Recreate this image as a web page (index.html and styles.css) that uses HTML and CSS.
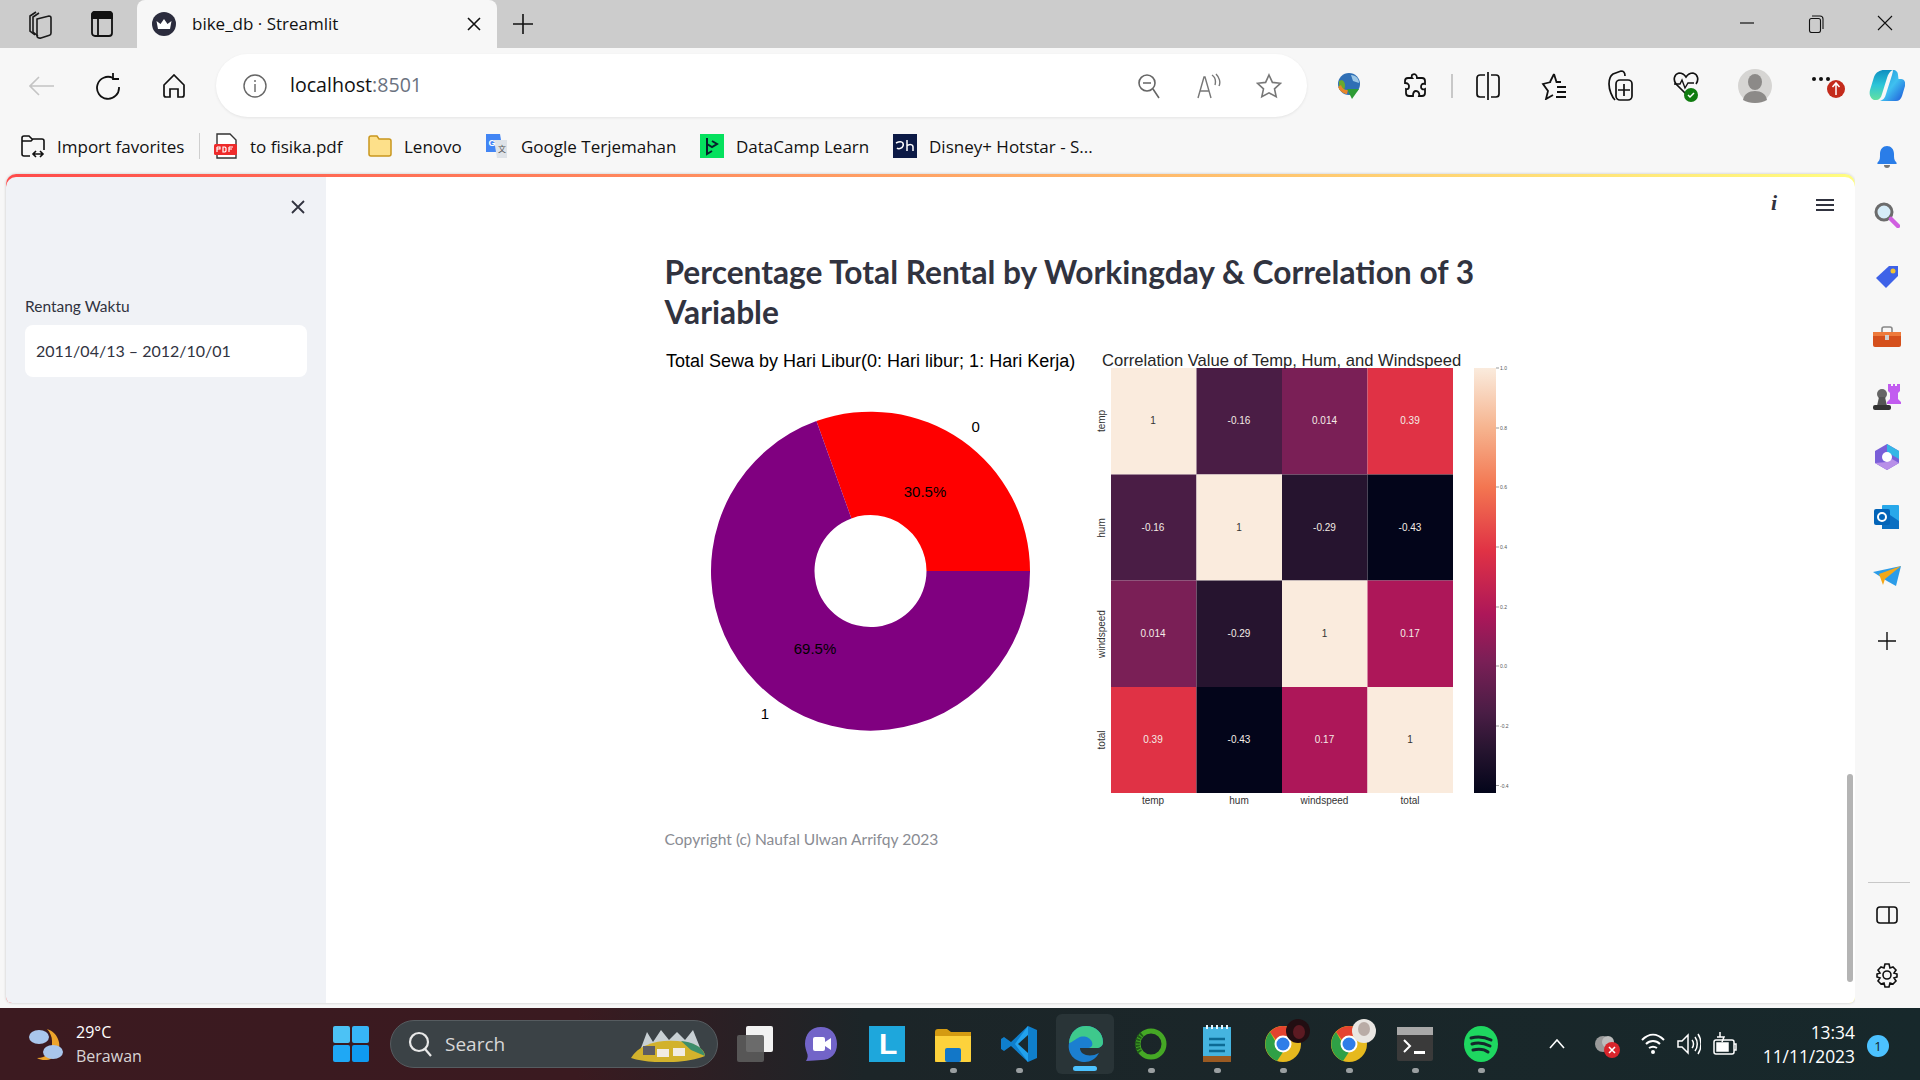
FILE: index.html
```html
<!DOCTYPE html>
<html lang="en">

<head>
    <meta charset="UTF-8">
    <meta name="viewport" content="width=device-width, initial-scale=1.0">
    <link rel="stylesheet" href="styles.css">
    <title>bike_db · Streamlit</title>
</head>

<body>
    <!-- browser tabs -->
    <header class="tabbar">
        <span class="tab-slot">
            <svg width="26" height="30" viewBox="0 0 26 30" fill="none" stroke="#1a1a1a" stroke-width="1.6"><path d="M9 26 4 22V7l6-4"/><path d="M12 27 7 23V8l6-4"/><path d="M11 10l12-3c1 0 2 1 2 2v15c0 1-.5 2-1.500 2.300L15 29c-2 .5-4-.5-4-2z"/></svg>
        </span>
        <span class="tab-slot tab-slot-narrow">
            <svg width="22" height="26" viewBox="0 0 22 26" fill="none" stroke="#111" stroke-width="1.800"><rect x="1" y="1" width="20" height="24" rx="3"/><path d="M1 7h20M7 7v18"/><path d="M1 4a3 3 0 0 1 3-3h14a3 3 0 0 1 3 3v3H1z" fill="#111"/></svg>
        </span>
        <div class="tab">
            <svg width="24" height="24" viewBox="0 0 24 24"><circle cx="12" cy="12" r="12" fill="#2b2c3d"/><path d="M4.500 9l4 3 3.500-5 3.500 5 4-3-1.500 8h-12z" fill="#fff"/></svg>
            <span class="tab-title">bike_db · Streamlit</span>
            <svg class="tab-close" width="14" height="14" viewBox="0 0 14 14" stroke="#111" stroke-width="1.600"><path d="M1 1l12 12M13 1 1 13"/></svg>
        </div>
        <span class="tab-new">
            <svg width="22" height="22" viewBox="0 0 22 22" stroke="#111" stroke-width="1.600"><path d="M11 1v20M1 11h20"/></svg>
        </span>
        <div class="window-controls">
            <span class="window-btn"><svg width="16" height="16" viewBox="0 0 16 16" stroke="#111" stroke-width="1.200"><path d="M1 8h14"/></svg></span>
            <span class="window-btn"><svg width="16" height="18" viewBox="0 0 16 18" fill="none" stroke="#111" stroke-width="1.100"><rect x="1.500" y="3.500" width="11" height="14" rx="2"/><path d="M4 1h8a3 3 0 0 1 3 3v10"/></svg></span>
            <span class="window-btn"><svg width="16" height="16" viewBox="0 0 16 16" stroke="#111" stroke-width="1.100"><path d="M1 1l14 14M15 1 1 15"/></svg></span>
        </div>
    </header>

    <!-- address bar and toolbar -->
    <nav class="toolbar">
        <span class="tool">
            <svg width="26" height="20" viewBox="0 0 26 20" fill="none" stroke="#c4c4c4" stroke-width="1.600"><path d="M25 10H1M10 1l-9 9 9 9"/></svg>
        </span>
        <span class="tool">
            <svg width="24" height="28" viewBox="0 0 24 28" fill="none" stroke="#111" stroke-width="1.800"><path d="M17 6A11 11 0 1 0 23 15"/><path d="M17 1v6h6" /></svg>
        </span>
        <span class="tool">
            <svg width="22" height="24" viewBox="0 0 22 24" fill="none" stroke="#111" stroke-width="1.700"><path d="M1 11 11 1l10 10v10a2 2 0 0 1-2 2h-4v-8H7v8H3a2 2 0 0 1-2-2z"/></svg>
        </span>
        <div class="address">
            <svg class="address-info" width="24" height="24" viewBox="0 0 24 24" fill="none" stroke="#666" stroke-width="1.400"><circle cx="12" cy="12" r="11"/><path d="M12 10v8M12 6v2"/></svg>
            <span class="address-text">localhost<span class="address-port">:8501</span></span>
            <span class="address-actions">
                <span class="tool tool-thin">
                    <svg width="22" height="26" viewBox="0 0 22 26" fill="none" stroke="#666" stroke-width="1.600"><circle cx="9" cy="10" r="8"/><path d="M5 10h8M15 16l6 9"/></svg>
                </span>
                <span class="tool tool-thin">
                    <svg width="24" height="26" viewBox="0 0 24 26" fill="none" stroke="#777" stroke-width="1.400"><path d="M1 25 7 4h1l6 21M3 18h9"/><path d="M15 2c3 2 4 6 3 10M19 1c3 3 5 8 3 12"/></svg>
                </span>
                <span class="tool tool-thin">
                    <svg width="26" height="26" viewBox="0 0 26 26" fill="none" stroke="#777" stroke-width="1.600"><path d="M13 2l3.400 7.400 8.100.9-6 5.500 1.700 8L13 19.800 5.800 23.800l1.700-8-6-5.500 8.100-.9z"/></svg>
                </span>
            </span>
        </div>
        <span class="toolbar-right">
            <span class="tool">
                <svg width="26" height="28" viewBox="0 0 26 28"><circle cx="13" cy="12" r="11" fill="#2f6fb5"/><path d="M3 9c4-2 6 1 6 5s-3 6-6 3z" fill="#6aa82e"/><path d="M15 3c5 0 8 4 8 8l-6-2z" fill="#9cc7e6"/><path d="M2 15c3 6 7 7 9 7l1-4c-4 0-6-2-7-5z" fill="#e8862a"/><path d="M11 17h12l-7 10z" fill="#2e9b35"/></svg>
            </span>
            <span class="tool">
                <svg width="24" height="28" viewBox="0 0 24 28" fill="none" stroke="#111" stroke-width="1.800"><path d="M9 3c3-2 5 0 5 3h5c2 0 3 1 3 3v3c-3-1-4 1-4 3s2 3 4 2v4c0 2-1 3-3 3h-3c1-3-1-5-3-5s-3 2-3 5H6c-2 0-3-1-3-3v-4c3 1 3-2 3-3s-1-3-4-3V9c0-2 1-3 3-3h4c-1-1 0-2 0-3z"/></svg>
            </span>
            <i class="toolbar-sep"></i>
            <span class="tool tool-split">
                <svg width="24" height="30" viewBox="0 0 24 30" fill="none" stroke="#111" stroke-width="1.700"><path d="M9 4H4a3 3 0 0 0-3 3v16a3 3 0 0 0 3 3h5M15 4h5a3 3 0 0 1 3 3v16a3 3 0 0 1-3 3h-5M12 1v28"/></svg>
            </span>
            <span class="tool">
                <svg width="26" height="28" viewBox="0 0 26 28" fill="none" stroke="#111" stroke-width="1.800"><path d="M13 2l2.500 8H20M10 10 2 12l5 7-2 8 7-4M9 10l4-8"/><path d="M16 15h9M16 20h9M15 25h10"/></svg>
            </span>
            <span class="tool">
                <svg width="26" height="32" viewBox="0 0 26 32" fill="none" stroke="#111" stroke-width="1.700"><path d="M8 30c-3-3-6-10-6-16 0-4 1-8 4-10l8-3c3 0 4 2 4 5"/><rect x="9" y="10" width="16" height="20" rx="4"/><path d="M17 14v12M11 20h12"/></svg>
            </span>
            <span class="tool">
                <svg width="26" height="32" viewBox="0 0 26 32"><path d="M13 24 3 14C0 10 1 4 6 3c3 0 5 1 7 4 2-3 4-4 7-4 5 1 6 7 3 11" fill="none" stroke="#111" stroke-width="1.700"/><path d="M1 14h6l2-4 3 8 3-5h6" fill="none" stroke="#111" stroke-width="1.400"/><circle cx="18" cy="25" r="7" fill="#107c10"/><path d="M15 25l2 2 4-4" fill="none" stroke="#fff" stroke-width="1.500"/></svg>
            </span>
            <span class="tool tool-profile">
                <svg width="34" height="34" viewBox="0 0 34 34"><circle cx="17" cy="17" r="17" fill="#d6d5d3"/><ellipse cx="17" cy="13" rx="7" ry="8" fill="#8c8a88"/><path d="M5 31c1-6 6-9 12-9s11 3 12 9c-3 2-8 3-12 3s-9-1-12-3z" fill="#8c8a88"/></svg>
            </span>
            <span class="tool tool-more">
                <svg width="36" height="30" viewBox="0 0 36 30"><circle cx="5" cy="8" r="2" fill="#111"/><circle cx="12" cy="8" r="2" fill="#111"/><circle cx="19" cy="8" r="2" fill="#111"/><circle cx="27" cy="18" r="9" fill="#c42b1c"/><path d="M27 24v-11M23.500 16l3.500-4 3.500 4" fill="none" stroke="#fff" stroke-width="1.500"/></svg>
            </span>
            <span class="tool tool-copilot">
                <svg width="36" height="34" viewBox="0 0 36 34">
                    <defs>
                        <linearGradient id="copilot-left" x1="0" y1="0" x2="0" y2="1">
                            <stop offset="0" stop-color="#0f8fc0"/>
                            <stop offset=".5" stop-color="#2cc5d8"/>
                            <stop offset="1" stop-color="#63e0a0"/>
                        </linearGradient>
                        <linearGradient id="copilot-right" x1="0" y1="0" x2="1" y2="1">
                            <stop offset="0" stop-color="#1b8fd0"/>
                            <stop offset=".5" stop-color="#3fc0f0"/>
                            <stop offset="1" stop-color="#1c52d8"/>
                        </linearGradient>
                    </defs>
                    <path d="M15 1h9c-3 1-5 4-6 8l-5 16c-1 4-3 6-6 6H5c-4-2-5-6-4-10l4-13c2-5 6-7 10-7z" fill="url(#copilot-left)"/>
                    <path d="M24 1c3 0 5 2 5 5l.5 4H32c3 0 5 3 4 7l-3 10c-1 3-3 5-6 5H11c3-1 5-3 6-7l6-19c.5-2 1-4 1-5z" fill="url(#copilot-right)"/>
                </svg>
            </span>
        </span>
    </nav>

    <div class="workspace">
        <div class="workspace-main">
            <!-- favorites bar -->
            <div class="bookmarks">
                <span class="bookmark bookmark-import">
                    <svg width="24" height="24" viewBox="0 0 24 24" fill="none" stroke="#111" stroke-width="1.600"><path d="M9 22H3a2 2 0 0 1-2-2V4a2 2 0 0 1 2-2h5l3 3h10a2 2 0 0 1 2 2v9M1 7h9l2-2"/><path d="M12 20h10M15 17l-3 3 3 3M19 17l3 3-3 3"/></svg>
                    Import favorites
                </span>
                <i class="bookmark-sep"></i>
                <span class="bookmark bookmark-pdf">
                    <svg width="24" height="26" viewBox="0 0 24 26"><path d="M3 1h13l6 6v18H3z" fill="#fff" stroke="#333" stroke-width="1.400"/><rect y="11" width="23" height="11" rx="1.500" fill="#ee2b2b"/><path d="M3 14v5M3 14h3v2H3M9 14v5h2l1-1v-3l-1-1zM15 14h4M15 14v5M15 16h3" fill="none" stroke="#fff" stroke-width="1.200"/></svg>
                    to fisika.pdf
                </span>
                <span class="bookmark bookmark-folder">
                    <svg width="24" height="22" viewBox="0 0 24 22"><path d="M1 3a2 2 0 0 1 2-2h6l2 3h10a2 2 0 0 1 2 2v13a2 2 0 0 1-2 2H3a2 2 0 0 1-2-2z" fill="#fde08a" stroke="#c9961e" stroke-width="1.500"/></svg>
                    Lenovo
                </span>
                <span class="bookmark bookmark-translate">
                    <svg width="24" height="24" viewBox="0 0 24 24"><path d="M1 0h14l3 18H1z" fill="#4285f4"/><path d="M9 6h13v18H12z" fill="#dfe3e8"/><text x="3.500" y="12" class="translate-g">G</text><text x="13" y="18" class="translate-x">文</text></svg>
                    Google Terjemahan
                </span>
                <span class="bookmark bookmark-datacamp">
                    <svg width="24" height="24" viewBox="0 0 24 24"><rect width="24" height="24" fill="#05e15e"/><path d="M7 4v16l5-3M7 10l5 3 5-3-5-3" fill="none" stroke="#06202c" stroke-width="2"/></svg>
                    DataCamp Learn
                </span>
                <span class="bookmark">
                    <svg width="24" height="24" viewBox="0 0 24 24"><rect width="24" height="24" fill="#0c1a46"/><path d="M3 9c6-3 8 0 7 3s-5 3-6 2" fill="none" stroke="#fff" stroke-width="1.500"/><path d="M14 6v11M14 12c2-2 6-2 6 1v4" fill="none" stroke="#fff" stroke-width="1.500"/></svg>
                    Disney+ Hotstar - S...
                </span>
            </div>

            <!-- streamlit page -->
            <div class="page">
                <aside class="sidebar">
                    <div class="sidebar-close">
                        <svg width="14" height="14" viewBox="0 0 14 14" stroke="#31333f" stroke-width="1.800"><path d="M1 1l12 12M13 1 1 13"/></svg>
                    </div>
                    <label class="date-label">Rentang Waktu</label>
                    <div class="date-input">2011/04/13 – 2012/10/01</div>
                </aside>
                <main class="report">
                    <div class="report-menu">
                        <span class="report-info">i</span>
                        <svg width="18" height="14" viewBox="0 0 18 14" stroke="#31333f" stroke-width="2"><path d="M0 2h18M0 7h18M0 12h18"/></svg>
                    </div>
                    <div class="report-body">
                        <h2 class="report-title">Percentage Total Rental by Workingday &amp; Correlation of 3 Variable</h2>
                        <div class="charts">
                            <svg class="chart-pie" width="437" height="460" viewBox="0 0 437 460">
                                <text x="1" y="21" class="pie-title">Total Sewa by Hari Libur(0: Hari libur; 1: Hari Kerja)</text>
                                <path d="M365 225A159.500 159.500 0 0 0 151.400 75.100L186.400 172.400A56 56 0 0 1 261.500 225Z" fill="#ff0000"/>
                                <path d="M365 225A159.500 159.500 0 1 1 151.400 75.100L186.400 172.400A56 56 0 1 0 261.500 225Z" fill="#800080"/>
                                <text x="310.700" y="85.500" class="pie-label">0</text>
                                <text x="100" y="372.500" class="pie-label">1</text>
                                <text x="260" y="150.500" class="pie-label">30.5%</text>
                                <text x="150" y="307.500" class="pie-label">69.5%</text>
                            </svg>
                            <svg class="chart-heat" width="430" height="470" viewBox="0 0 430 470">
                                <defs>
                                    <linearGradient id="rocket" x1="0" y1="0" x2="0" y2="1">
                                        <stop offset="0" stop-color="#faebdd"/>
                                        <stop offset=".14" stop-color="#f6b48f"/>
                                        <stop offset=".28" stop-color="#f37651"/>
                                        <stop offset=".43" stop-color="#e03245"/>
                                        <stop offset=".58" stop-color="#ad1759"/>
                                        <stop offset=".69" stop-color="#7a1f56"/>
                                        <stop offset=".81" stop-color="#4a1d45"/>
                                        <stop offset=".9" stop-color="#26142f"/>
                                        <stop offset="1" stop-color="#03051a"/>
                                    </linearGradient>
                                </defs>
                                <rect x="21" y="22" width="85.500" height="106.500" fill="#faebdd"/>
                                <rect x="106.500" y="22" width="85.500" height="106.500" fill="#4a1d45"/>
                                <rect x="192" y="22" width="85.500" height="106.500" fill="#7a1f56"/>
                                <rect x="277.500" y="22" width="85.500" height="106.500" fill="#e03245"/>
                                <rect x="21" y="128.500" width="85.500" height="106" fill="#4a1d45"/>
                                <rect x="106.500" y="128.500" width="85.500" height="106" fill="#faebdd"/>
                                <rect x="192" y="128.500" width="85.500" height="106" fill="#26142f"/>
                                <rect x="277.500" y="128.500" width="85.500" height="106" fill="#03051a"/>
                                <rect x="21" y="234.500" width="85.500" height="106.500" fill="#7a1f56"/>
                                <rect x="106.500" y="234.500" width="85.500" height="106.500" fill="#26142f"/>
                                <rect x="192" y="234.500" width="85.500" height="106.500" fill="#faebdd"/>
                                <rect x="277.500" y="234.500" width="85.500" height="106.500" fill="#ad1759"/>
                                <rect x="21" y="341" width="85.500" height="106" fill="#e03245"/>
                                <rect x="106.500" y="341" width="85.500" height="106" fill="#03051a"/>
                                <rect x="192" y="341" width="85.500" height="106" fill="#ad1759"/>
                                <rect x="277.500" y="341" width="85.500" height="106" fill="#faebdd"/>

                                <text x="12" y="20" class="heat-title">Correlation Value of Temp, Hum, and Windspeed</text>

                                <g class="heat-dark">
                                    <text x="63" y="78">1</text>
                                    <text x="149" y="184.500">1</text>
                                    <text x="234.500" y="291">1</text>
                                    <text x="320" y="397">1</text>
                                </g>
                                <g class="heat-light">
                                    <text x="149" y="78">-0.16</text>
                                    <text x="234.500" y="78">0.014</text>
                                    <text x="320" y="78">0.39</text>
                                    <text x="63" y="184.500">-0.16</text>
                                    <text x="234.500" y="184.500">-0.29</text>
                                    <text x="320" y="184.500">-0.43</text>
                                    <text x="63" y="291">0.014</text>
                                    <text x="149" y="291">-0.29</text>
                                    <text x="320" y="291">0.17</text>
                                    <text x="63" y="397">0.39</text>
                                    <text x="149" y="397">-0.43</text>
                                    <text x="234.500" y="397">0.17</text>
                                </g>
                                <g class="heat-axis">
                                    <text x="63" y="458">temp</text>
                                    <text x="149" y="458">hum</text>
                                    <text x="234.500" y="458">windspeed</text>
                                    <text x="320" y="458">total</text>
                                    <text transform="translate(15 75) rotate(-90)">temp</text>
                                    <text transform="translate(15 182) rotate(-90)">hum</text>
                                    <text transform="translate(15 288) rotate(-90)">windspeed</text>
                                    <text transform="translate(15 394) rotate(-90)">total</text>
                                </g>
                                <rect x="384" y="22" width="22" height="425" fill="url(#rocket)"/>
                                <path d="M406 22h3M406 82h3M406 141h3M406 201h3M406 261h3M406 320h3M406 380h3M406 439.500h3" stroke="#555" stroke-width=".6"/>
                                <g class="heat-ticks">
                                    <text x="410" y="24">1.0</text>
                                    <text x="410" y="84">0.8</text>
                                    <text x="410" y="143">0.6</text>
                                    <text x="410" y="203">0.4</text>
                                    <text x="410" y="263">0.2</text>
                                    <text x="410" y="322">0.0</text>
                                    <text x="410" y="382">-0.2</text>
                                    <text x="410" y="441.500">-0.4</text>
                                </g>
                            </svg>
                        </div>
                        <p class="caption">Copyright (c) Naufal Ulwan Arrifqy 2023</p>
                    </div>
                    <i class="scroll-thumb"></i>
                </main>
            </div>
        </div>

        <!-- edge sidebar -->
        <aside class="edgebar">
            <span class="edge-item">
                <svg width="24" height="24" viewBox="0 0 24 24"><path d="M3 17c2-2 2-4 2-8 0-5 3-8 7-8s7 3 7 8c0 4 0 6 2 8 1 1 1 2 0 2H3c-1 0-1-1 0-2z" fill="#2a7de8"/><path d="M9 20h6c0 2-1 3-3 3s-3-1-3-3z" fill="#777"/></svg>
            </span>
            <span class="edge-item edge-search">
                <svg width="26" height="26" viewBox="0 0 26 26"><circle cx="10" cy="10" r="8" fill="#d6ecf8" stroke="#6c6c6c" stroke-width="3"/><path d="M17 17l7 7" stroke="#d05fe0" stroke-width="4.500" stroke-linecap="round"/></svg>
            </span>
            <span class="edge-item">
                <svg width="26" height="26" viewBox="0 0 26 26"><path d="M15 2h9v10L12 24 2 14z" fill="#3e62e8"/><circle cx="19" cy="7" r="2.500" fill="#f2c230"/></svg>
            </span>
            <span class="edge-item">
                <svg width="28" height="22" viewBox="0 0 28 22"><path d="M9 6V3a2 2 0 0 1 2-2h6a2 2 0 0 1 2 2v3" fill="none" stroke="#888" stroke-width="1.600"/><rect y="6" width="28" height="15" rx="2" fill="#d5501c"/><rect y="6" width="28" height="4" fill="#ee7a3b"/><rect x="12" y="9" width="4" height="5" fill="#cfcfcf"/></svg>
            </span>
            <span class="edge-item">
                <svg width="30" height="28" viewBox="0 0 30 28"><circle cx="10" cy="11" r="5" fill="#666"/><path d="M7 14h6l2 9H5z" fill="#555"/><rect x="1" y="22" width="18" height="5" rx="2" fill="#333"/><path d="M16 1h3v2h2V1h2v2h2V1h3v7l-2 2v6l3 3v2H15v-2l3-3v-6l-2-2z" fill="#c25cf0"/></svg>
            </span>
            <span class="edge-item">
                <svg width="26" height="28" viewBox="0 0 26 28"><path d="M13 1 25 8v12l-12 7L1 20V8z" fill="#7a5fd8"/><path d="M13 1 25 8v8l-7-4-5-3z" fill="#35b6e6"/><path d="M1 20l12 7 12-7-7-4-5 3z" fill="#b88fe8"/><circle cx="13" cy="14" r="5" fill="#fff"/></svg>
            </span>
            <span class="edge-item">
                <svg width="26" height="26" viewBox="0 0 26 26"><rect x="8" y="1" width="17" height="24" rx="1" fill="#28a8ea"/><path d="M8 14l8-3 9 6v8H8z" fill="#0a6fc2"/><rect y="5" width="16" height="16" rx="2" fill="#0364b8"/><circle cx="8" cy="13" r="4" fill="none" stroke="#fff" stroke-width="2"/></svg>
            </span>
            <span class="edge-item">
                <svg width="28" height="22" viewBox="0 0 28 22"><path d="M0 6 28 0 23 20 14 15z" fill="#2b9ce8"/><path d="M6 8 28 0 12 13l-2 6z" fill="#f5a818"/></svg>
            </span>
            <span class="edge-item edge-add">
                <svg width="20" height="20" viewBox="0 0 20 20" stroke="#111" stroke-width="1.400"><path d="M10 1v18M1 10h18"/></svg>
            </span>
            <span class="edge-bottom">
                <i class="edge-sep"></i>
                <span class="edge-item">
                    <svg width="22" height="20" viewBox="0 0 22 20" fill="none" stroke="#111" stroke-width="1.600"><rect x="1" y="2" width="20" height="16" rx="3"/><path d="M13 2v16"/></svg>
                </span>
                <span class="edge-item">
                    <svg width="26" height="26" viewBox="0 0 26 26" fill="none" stroke="#111" stroke-width="1.600"><circle cx="13" cy="13" r="4"/><path d="M11 2h4l1 4 3-1 3 3-2 3 3 1v3l-3 1 2 3-3 3-3-1-1 4h-4l-1-4-3 1-3-3 2-3-3-1v-3l3-1-2-3 3-3 3 1z"/></svg>
                </span>
            </span>
        </aside>
    </div>

    <!-- windows taskbar -->
    <footer class="taskbar">
        <div class="weather">
            <svg width="38" height="36" viewBox="0 0 38 36"><path d="M20 3c10 3 16 15 10 25-4 6-13 8-20 4 9 0 16-6 15-17 0-4-2-9-5-12z" fill="#eda42b"/><ellipse cx="12" cy="11" rx="10" ry="7" fill="#a9c6ec"/><ellipse cx="26" cy="26" rx="10" ry="7" fill="#a9c6ec"/></svg>
            <div class="weather-text">
                <span>29°C</span>
                <span class="weather-sub">Berawan</span>
            </div>
        </div>
        <span class="start">
            <svg width="36" height="36" viewBox="0 0 36 36"><rect width="17" height="17" rx="2" fill="#4cc2f5"/><rect x="19" width="17" height="17" rx="2" fill="#37b5f6"/><rect y="19" width="17" height="17" rx="2" fill="#1fa8f5"/><rect x="19" y="19" width="17" height="17" rx="2" fill="#0f9af0"/></svg>
        </span>
        <div class="searchbox">
            <svg width="24" height="26" viewBox="0 0 24 26" fill="none" stroke="#e8e8e8" stroke-width="2.200"><circle cx="11" cy="11" r="9"/><path d="M17 18l6 7"/></svg>
            <span>Search</span>
            <svg class="search-art" width="76" height="36" viewBox="0 0 76 36"><path d="M10 22 16 6l6 10 8-12 8 10 8-8 8 8 8-10 8 20z" fill="#c8d0d4"/><path d="M0 32c8-14 30-20 54-16 12 2 20 8 20 14-20 8-56 8-74 2z" fill="#d2b22c"/><path d="M50 15c10 1 22 5 24 15l-14-6z" fill="#3d8e6b"/><rect x="12" y="20" width="12" height="9" fill="#5c5c62"/><rect x="26" y="23" width="12" height="8" fill="#f1ece4"/><rect x="42" y="22" width="12" height="8" fill="#f1ece4"/></svg>
        </div>
        <div class="task-apps">
            <span class="task-app">
                <svg width="36" height="36" viewBox="0 0 36 36"><rect x="9" y="0" width="27" height="26" rx="2" fill="#f2f2f2"/><rect y="9" width="27" height="27" rx="2" fill="#5c5c5c" opacity=".9"/></svg>
            </span>
            <span class="task-app">
                <svg width="34" height="36" viewBox="0 0 34 36"><path d="M17 1c10 0 16 7 16 17s-6 16-16 16c-4 0-9 1-15 1 2-3 2-6 1-8-1-3-2-6-2-9C1 8 7 1 17 1z" fill="#7264c8"/><rect x="9" y="11" width="12" height="14" rx="2" fill="#fff"/><path d="M21 16l6-4v12l-6-4z" fill="#fff"/></svg>
            </span>
            <span class="task-app">
                <svg width="36" height="36" viewBox="0 0 36 36"><rect width="36" height="36" fill="#1ea7dc"/><text x="10" y="28" class="task-letter">L</text></svg>
            </span>
            <span class="task-app task-running">
                <svg width="36" height="36" viewBox="0 0 36 36"><path d="M0 6a3 3 0 0 1 3-3h9l4 3h20v30H0z" fill="#d49b12"/><path d="M0 10h36v24a2 2 0 0 1-2 2H2a2 2 0 0 1-2-2z" fill="#fdd23c"/><rect x="10" y="22" width="16" height="14" rx="2" fill="#1277c8"/></svg>
            </span>
            <span class="task-app task-running">
                <svg width="36" height="38" viewBox="0 0 36 38"><path d="M27 1 36 5v28l-9 4L10 21 3 26 0 24v-10l3-2 7 5z" fill="#0f7fcc"/><path d="M27 1v36L14 19z" fill="#22a2ee"/><path d="M27 10v18l-10-9z" fill="#1a2a30"/></svg>
            </span>
            <span class="task-app task-active">
                <svg width="36" height="38" viewBox="0 0 36 38"><path d="M2 18C3 7 10 1 19 1c10 0 17 7 17 16 0 4-3 6-7 6H13c0 7 10 10 19 5-3 6-9 9-14 9C8 37 0 29 2 18z" fill="#1b7fd0"/><path d="M2 18C3 7 10 1 19 1c10 0 17 7 17 16 0 4-3 6-7 6H22c3-1 4-3 3-6-2-5-9-7-14-4-4 2-7 5-9 5z" fill="#3ec98c"/></svg>
            </span>
            <span class="task-app task-running">
                <svg width="34" height="36" viewBox="0 0 34 36" fill="none"><circle cx="17" cy="18" r="13" stroke="#45a825" stroke-width="5"/><path d="M8 8A13 13 0 0 0 6 26" stroke="#1f5c18" stroke-width="5" stroke-dasharray="2 1"/></svg>
            </span>
            <span class="task-app task-running">
                <svg width="30" height="38" viewBox="0 0 30 38"><rect x="1" y="2" width="28" height="30" fill="#45b4e0"/><rect x="1" y="31" width="28" height="6" fill="#9a5a22"/><path d="M7 14h16M7 20h16M7 26h16" stroke="#0c6a94" stroke-width="2.500"/><path d="M5 0v4M10 0v4M15 0v4M20 0v4M25 0v4" stroke="#e8f6fc" stroke-width="2"/></svg>
            </span>
            <span class="task-app task-running">
                <svg class="chrome-icon" width="36" height="36" viewBox="0 0 36 36"><circle cx="18" cy="18" r="18" fill="#e6b91e"/><path d="M18 0a18 18 0 0 1 16 10H18a8 8 0 0 0-7 4L5 6a18 18 0 0 1 13-6z" fill="#e4432f"/><path d="M5 6l8 14 5 6-6 9A18 18 0 0 1 5 6z" fill="#2fa046"/><circle cx="18" cy="18" r="8.500" fill="#fff"/><circle cx="18" cy="18" r="6.500" fill="#2f7de8"/></svg>
                <svg class="task-avatar" width="24" height="24" viewBox="0 0 24 24"><circle cx="12" cy="12" r="12" fill="#220e12"/><ellipse cx="13" cy="13" rx="6" ry="7" fill="#5c1a22"/></svg>
            </span>
            <span class="task-app task-running">
                <svg class="chrome-icon" width="36" height="36" viewBox="0 0 36 36"><circle cx="18" cy="18" r="18" fill="#e6b91e"/><path d="M18 0a18 18 0 0 1 16 10H18a8 8 0 0 0-7 4L5 6a18 18 0 0 1 13-6z" fill="#e4432f"/><path d="M5 6l8 14 5 6-6 9A18 18 0 0 1 5 6z" fill="#2fa046"/><circle cx="18" cy="18" r="8.500" fill="#fff"/><circle cx="18" cy="18" r="6.500" fill="#2f7de8"/></svg>
                <svg class="task-avatar" width="24" height="24" viewBox="0 0 24 24"><circle cx="12" cy="12" r="12" fill="#e9e6e2"/><ellipse cx="12" cy="10" rx="6" ry="7" fill="#b9aca6"/></svg>
            </span>
            <span class="task-app task-running">
                <svg width="36" height="34" viewBox="0 0 36 34"><rect width="36" height="34" rx="2" fill="#3a3a3a"/><rect width="36" height="8" fill="#a8a8a8"/><path d="M7 13l6 6-6 6" fill="none" stroke="#fff" stroke-width="2"/><rect x="17" y="24" width="11" height="3" fill="#fff"/></svg>
            </span>
            <span class="task-app task-running">
                <svg width="34" height="36" viewBox="0 0 34 36"><ellipse cx="17" cy="18" rx="17" ry="18" fill="#1ed760"/><path d="M7 12c7-2 14-1 20 2M8 18c6-2 12-1 18 2M9 24c5-1 11-1 15 2" fill="none" stroke="#14282c" stroke-width="3" stroke-linecap="round"/></svg>
            </span>
        </div>
        <div class="tray">
            <span class="tray-item tray-caret">
                <svg width="16" height="10" viewBox="0 0 16 10" fill="none" stroke="#fff" stroke-width="1.600"><path d="M1 9l7-8 7 8"/></svg>
            </span>
            <span class="tray-item tray-cloud">
                <svg width="28" height="28" viewBox="0 0 28 28"><circle cx="10" cy="14" r="8" fill="#9a9a9a"/><circle cx="15" cy="12" r="6" fill="#bdbdbd"/><ellipse cx="19" cy="20" rx="8" ry="8" fill="#d9252c"/><path d="M16 17l6 6M22 17l-6 6" stroke="#fff" stroke-width="1.600"/></svg>
            </span>
            <span class="tray-item tray-wifi">
                <svg width="24" height="22" viewBox="0 0 24 22" fill="none" stroke="#fff" stroke-width="2"><path d="M1 7c7-7 15-7 22 0M5 11c4-4 10-4 14 0M8 15c3-2 5-2 8 0"/><circle cx="12" cy="19" r="1" fill="#fff"/></svg>
            </span>
            <span class="tray-item tray-tight">
                <svg width="24" height="24" viewBox="0 0 24 24" fill="none" stroke="#fff" stroke-width="1.500"><path d="M1 9h4l6-6v18l-6-6H1zM15 8c2 2 2 6 0 8M18 5c3 4 3 10 0 14M21 2c4 6 4 14 0 20"/></svg>
            </span>
            <span class="tray-item tray-tight">
                <svg width="26" height="26" viewBox="0 0 26 26" fill="none" stroke="#fff" stroke-width="1.500"><rect x="2" y="9" width="20" height="14" rx="2"/><path d="M22 13h2v6h-2M8 1v5M5 6h7l-2 5"/><rect x="5" y="12" width="11" height="8" fill="#fff"/></svg>
            </span>
        </div>
        <div class="clock">
            <span>13:34</span>
            <span>11/11/2023</span>
        </div>
        <span class="notify">1</span>
    </footer>
</body>

</html>
```

FILE: styles.css
```css
* {
    box-sizing: border-box;
}

body {
    margin: 0;
    width: 1920px;
    height: 1080px;
    overflow: hidden;
    display: flex;
    flex-direction: column;
    background-color: #f7f7f7;
    font-family: "Open Sans", "Noto Sans", sans-serif;
    color: #111;
}

/* tabs */
.tabbar {
    height: 48px;
    flex-shrink: 0;
    display: flex;
    align-items: center;
    padding-left: 6px;
    background-color: #cccccc;
}

.tab-slot {
    width: 66px;
    display: flex;
    justify-content: center;
}

.tab-slot-narrow {
    width: 60px;
}

.tab {
    width: 360px;
    height: 48px;
    margin-left: 5px;
    padding: 0 16px 0 15px;
    display: flex;
    align-items: center;
    background-color: #f7f7f7;
    border-radius: 8px 8px 0 0;
}

.tab-title {
    margin: 0 0 2px 16px;
    font-size: 17px;
}

.tab-close {
    margin-left: auto;
}

.tab-new {
    width: 52px;
    display: flex;
    justify-content: center;
}

.window-controls {
    margin-left: auto;
    padding-right: 1px;
    display: flex;
}

.window-btn {
    width: 69px;
    display: flex;
    justify-content: center;
}

/* toolbar */
.toolbar {
    height: 72px;
    flex-shrink: 0;
    display: flex;
    align-items: center;
    padding: 3px 0 0 9px;
}

.tool {
    width: 66px;
    display: flex;
    justify-content: center;
}

.tool-thin {
    width: 60px;
}

.address {
    width: 1091px;
    height: 63px;
    margin-left: 9px;
    padding: 0 8px 0 27px;
    display: flex;
    align-items: center;
    background-color: #fff;
    border-radius: 32px;
    box-shadow: 0 1px 3px rgba(0, 0, 0, 0.08);
}

.address-text {
    margin: 0 0 2px 23px;
    font-size: 19.6px;
}

.address-port {
    color: #6b7280;
}

.address-actions {
    margin-left: auto;
    display: flex;
}

.toolbar-right {
    margin-left: 9px;
    display: flex;
    align-items: center;
}

.toolbar-sep {
    width: 2px;
    height: 24px;
    margin: 0 2px 0 3px;
    background-color: #c8c8c8;
}

.tool-split {
    width: 66px;
}

.tool-profile {
    margin-left: 3px;
}

.tool-more {
    margin-left: 3px;
}

.tool-more svg {
    margin-left: 6px;
}

.tool-copilot {
    width: 60px;
}

.workspace {
    flex: 1;
    display: flex;
    min-height: 0;
}

.workspace-main {
    flex: 1;
    min-width: 0;
    display: flex;
    flex-direction: column;
}

/* favorites */
.bookmarks {
    height: 54px;
    flex-shrink: 0;
    display: flex;
    align-items: center;
    padding: 0 0 2px 21px;
    font-size: 17px;
}

.bookmark {
    display: flex;
    align-items: center;
    gap: 12px;
    white-space: nowrap;
}

.bookmark-import {
    width: 178px;
}

.bookmark-sep {
    width: 1px;
    height: 26px;
    margin-right: 14px;
    background-color: #cfcfcf;
}

.bookmark-pdf {
    width: 154px;
}

.bookmark-folder {
    width: 117px;
}

.bookmark-translate {
    width: 215px;
}

.bookmark-datacamp {
    width: 193px;
}

.translate-g {
    font-size: 9px;
    font-weight: 700;
    fill: #fff;
    font-family: "Liberation Sans", sans-serif;
}

.translate-x {
    font-size: 8px;
    fill: #555;
    font-family: "Noto Sans CJK SC", sans-serif;
}

/* streamlit page */
.page {
    flex: 1;
    min-height: 0;
    margin: 0 0 5px 6px;
    padding-top: 3px;
    display: flex;
    background: linear-gradient(90deg, #ff4b4b, #fffd80);
    border-radius: 10px 10px 6px 6px;
    box-shadow: 0 0 3px rgba(0, 0, 0, 0.2);
    overflow: hidden;
    font-family: "Lato", "Noto Sans", sans-serif;
    color: #31333f;
}

.sidebar {
    width: 320px;
    flex-shrink: 0;
    padding: 0 19px;
    background-color: #f0f2f6;
    border-top-left-radius: 10px;
}

.sidebar-close {
    height: 127px;
    padding-top: 23px;
    display: flex;
    justify-content: flex-end;
    padding-right: 2px;
}

.date-label {
    display: block;
    height: 22px;
    font-size: 15.5px;
    line-height: 18px;
    margin-top: -7px;
}

.date-input {
    height: 52px;
    margin-top: 6px;
    padding-left: 11px;
    line-height: 52px;
    font-size: 16px;
    background-color: #fff;
    border-radius: 8px;
}

.report {
    flex: 1;
    position: relative;
    min-width: 0;
    background-color: #fff;
    border-top-right-radius: 10px;
}

.report-menu {
    height: 0;
    display: flex;
    justify-content: flex-end;
    gap: 39px;
    padding: 18px 21px 0 0;
}

.report-info {
    height: 28px;
    font-family: "Liberation Serif", serif;
    font-style: italic;
    font-weight: 700;
    font-size: 22px;
    line-height: 16px;
}

.report-menu svg {
    margin-top: 3px;
}

.report-body {
    width: 852px;
    margin: 0 auto;
    padding-top: 57px;
}

.report-title {
    margin: 0;
    font-size: 31.7px;
    line-height: 40px;
    font-weight: 700;
}

.charts {
    display: flex;
    margin-top: 14px;
}

.chart-pie {
    flex-shrink: 0;
    margin-right: -12px;
}

.chart-heat {
    flex-shrink: 0;
}

.pie-title {
    font-family: "Liberation Sans", sans-serif;
    font-size: 18px;
    fill: #000;
}

.pie-label {
    font-family: "Liberation Sans", sans-serif;
    font-size: 15px;
    fill: #000;
    text-anchor: middle;
}

.heat-title {
    font-family: "Liberation Sans", sans-serif;
    font-size: 16.6px;
    fill: #262626;
}

.heat-dark text,
.heat-light text,
.heat-axis text {
    font-family: "Liberation Sans", sans-serif;
    font-size: 10px;
    text-anchor: middle;
}

.heat-dark text {
    fill: #333;
}

.heat-light text {
    fill: #f4ece6;
}

.heat-axis text {
    fill: #333;
}

.heat-ticks text {
    font-family: "Liberation Sans", sans-serif;
    font-size: 5px;
    fill: #555;
}

.caption {
    margin: 14px 0 0;
    font-size: 15.6px;
    color: #8a8c93;
}

.scroll-thumb {
    position: absolute;
    right: 2px;
    top: 597px;
    width: 6px;
    height: 208px;
    border-radius: 3px;
    background-color: #b4b4b4;
}

/* edge bar */
.edgebar {
    width: 65px;
    flex-shrink: 0;
    display: flex;
    flex-direction: column;
    padding: 7px 1px 3px 0;
    background-color: #f7f7f7;
}

.edge-item {
    height: 60px;
    flex-shrink: 0;
    display: flex;
    align-items: center;
    justify-content: center;
}

.edge-search svg {
    margin-bottom: 4px;
}

.edge-add {
    margin-top: 4px;
}

.edge-bottom {
    margin-top: auto;
    display: flex;
    flex-direction: column;
}

.edge-sep {
    height: 1px;
    margin: 0 9px 2px 13px;
    background-color: #c8c8c8;
}

/* taskbar */
.taskbar {
    height: 72px;
    flex-shrink: 0;
    display: flex;
    align-items: center;
    position: relative;
    background: linear-gradient(90deg, #3c1a20 0%, #3a1a20 30%, #1c2528 45%, #17282b 100%);
    color: #fff;
}

.weather {
    width: 329px;
    padding-left: 27px;
    display: flex;
    align-items: center;
    gap: 11px;
}

.weather-text {
    display: flex;
    flex-direction: column;
    font-size: 16px;
    line-height: 24px;
}

.weather-sub {
    color: #d8d4d4;
}

.start {
    width: 44px;
    display: flex;
    justify-content: center;
}

.searchbox {
    width: 328px;
    height: 48px;
    margin-left: 17px;
    padding: 0 10px 0 17px;
    display: flex;
    align-items: center;
    gap: 13px;
    background-color: #3b4246;
    border: 1px solid #565c60;
    border-radius: 24px;
    font-size: 19px;
    color: #d8d8d8;
}

.search-art {
    margin-left: auto;
}

.task-apps {
    margin-left: 4px;
    display: flex;
}

.task-app {
    width: 66px;
    height: 72px;
    position: relative;
    display: flex;
    align-items: center;
    justify-content: center;
    padding-bottom: 1px;
}

.task-running::after {
    content: "";
    position: absolute;
    left: 30px;
    bottom: 7px;
    width: 7px;
    height: 5px;
    border-radius: 3px;
    background-color: #9a9fa1;
}

.task-active {
    align-self: center;
    background-color: #293437;
    border-radius: 6px;
    height: 60px;
    width: 58px;
    margin: 0 4px;
}

.task-active::after {
    content: "";
    position: absolute;
    left: 17px;
    bottom: 3px;
    width: 24px;
    height: 5px;
    border-radius: 3px;
    background-color: #4cc2ff;
}

.task-letter {
    font-family: "Liberation Sans", sans-serif;
    font-weight: 700;
    font-size: 30px;
    fill: #fff;
}

.task-avatar {
    position: absolute;
    top: 11px;
    right: 6px;
}

.tray {
    margin-left: 20px;
    display: flex;
    align-items: center;
}

.tray-item {
    width: 38px;
    display: flex;
    justify-content: center;
}

.tray-caret {
    width: 46px;
}

.tray-cloud {
    width: 48px;
    margin-left: 3px;
}

.tray-wifi {
    margin-left: 3px;
}

.tray-tight {
    margin-left: -2px;
}

.clock {
    margin-left: auto;
    display: flex;
    flex-direction: column;
    align-items: flex-end;
    font-size: 17.4px;
    line-height: 24px;
}

.notify {
    width: 22px;
    height: 22px;
    margin: 4px 31px 0 12px;
    border-radius: 50%;
    background-color: #4cc2ff;
    color: #10222a;
    font-size: 13px;
    line-height: 22px;
    text-align: center;
}
```
